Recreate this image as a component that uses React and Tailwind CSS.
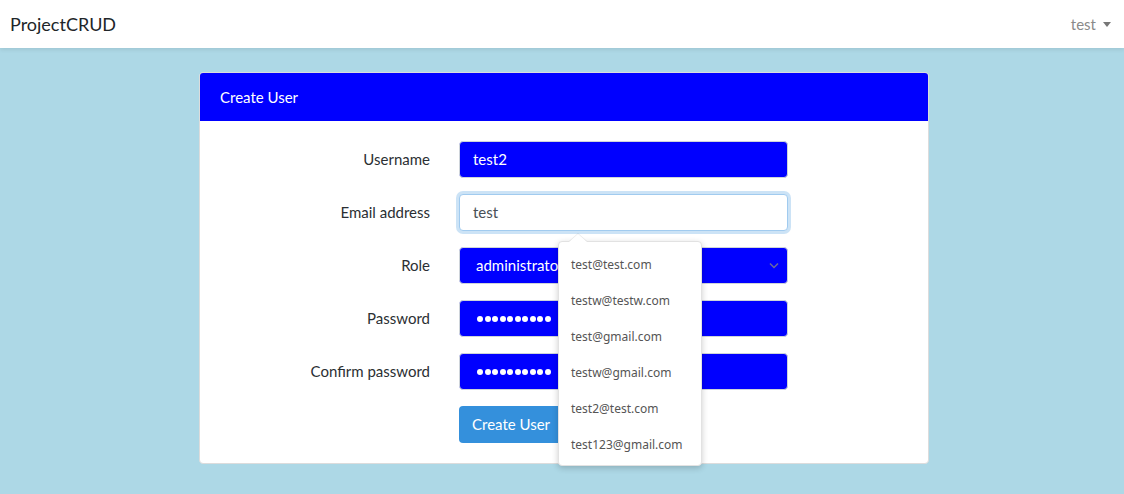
import React from 'react'

const suggestions = [
    "test@test.com",
    "testw@testw.com",
    "test@gmail.com",
    "testw@gmail.com",
    "test2@test.com",
    "test123@gmail.com",
];

const Row = ({ label, children }) => (
    <div className="flex items-center gap-[29px]">
        <label className="w-[210px] text-right text-[15px] text-[#2b2f33]">{label}</label>
        {children}
    </div>
);

const blueBox = "h-[37px] w-[329px] rounded-[4px] border border-[#ced4da] bg-[#0000ff] px-[13px] flex items-center text-[15px] text-white";

const Dots = () => (
    <div className="flex gap-[1.5px]">
        {Array.from({ length: 10 }).map((_, i) => (
            <span key={i} className="w-[6px] h-[6px] rounded-full bg-white"></span>
        ))}
    </div>
);

const App = () => {
    return (
        <div className="min-h-[494px] bg-[#add8e6]" style={{ fontFamily: 'Lato, "Noto Sans", sans-serif' }}>
            <nav className="h-[48px] bg-white shadow-[0_2px_4px_rgba(0,0,0,0.08)] flex items-center justify-between pl-[10px] pr-[13px]">
                <span className="text-[18px] text-[#212529]">ProjectCRUD</span>
                <span className="flex items-center gap-[7px] text-[15px] text-[#8a8a8a]">
                    test
                    <span className="w-0 h-0 border-l-[4px] border-r-[4px] border-t-[5px] border-l-transparent border-r-transparent border-t-[#777]"></span>
                </span>
            </nav>

            <div className="pt-[24px] pl-[199px]">
                <div className="w-[730px] rounded-[4px] border border-[#dcdcdc] bg-white overflow-visible">
                    <div className="h-[48px] bg-[#0000ff] rounded-t-[3px] flex items-center px-[20px] text-[15px] text-white">
                        Create User
                    </div>
                    <div className="px-[20px] pt-[20px] pb-[20px] flex flex-col gap-[16px]">
                        <Row label="Username">
                            <div className={blueBox}>test2</div>
                        </Row>
                        <Row label="Email address">
                            <div className="relative">
                                <div className="h-[37px] w-[329px] rounded-[4px] border border-[#a1cbef] bg-white px-[13px] flex items-center text-[15px] text-[#495057] shadow-[0_0_0_3px_rgba(52,144,220,0.25)]">
                                    test
                                </div>
                                <div className="absolute left-[99px] top-[47px] z-10 w-[144px] rounded-[4px] border border-[#e2e2e2] bg-white pt-[5px] pb-[2px] shadow-[0_2px_6px_rgba(0,0,0,0.2)]">
                                    <div className="absolute -top-[8px] left-[10px] w-0 h-0 border-l-[9px] border-r-[9px] border-b-[8px] border-l-transparent border-r-transparent border-b-white drop-shadow-[0_-1px_0_rgba(0,0,0,0.08)]"></div>
                                    {suggestions.map((s) => (
                                        <div key={s} className="h-[36px] flex items-center px-[12px] text-[12px] text-[#555]" style={{ fontFamily: '"Noto Sans", sans-serif' }}>
                                            {s}
                                        </div>
                                    ))}
                                </div>
                            </div>
                        </Row>
                        <Row label="Role">
                            <div className={blueBox + " justify-between pl-[16px] pr-[8px]"}>
                                <span>administrator</span>
                                <svg width="10" height="7" viewBox="0 0 10 7" fill="none">
                                    <path d="M1 1.5 5 5.5 9 1.5" stroke="#6b6b9a" strokeWidth="1.5" />
                                </svg>
                            </div>
                        </Row>
                        <Row label="Password">
                            <div className={blueBox + " pl-[17px]"}><Dots /></div>
                        </Row>
                        <Row label="Confirm password">
                            <div className={blueBox + " pl-[17px]"}><Dots /></div>
                        </Row>
                        <div className="pl-[239px]">
                            <button className="h-[37px] rounded-[4px] bg-[#3490dc] px-[13px] text-[15px] text-white">Create User</button>
                        </div>
                    </div>
                </div>
            </div>
        </div>
    )
}

export default App;
